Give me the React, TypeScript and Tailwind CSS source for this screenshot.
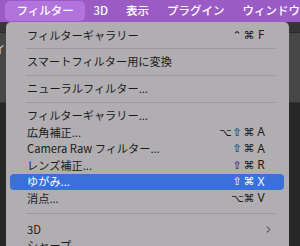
import React from 'react';
import { ChevronRight } from 'lucide-react';

type Row =
  | { kind: 'item'; label: string; keys?: string[]; active?: boolean; sub?: boolean }
  | { kind: 'sep'; h: string };

const rows: Row[] = [
  { kind: 'item', label: 'フィルターギャラリー', keys: ['⌃', '⌘', 'F'] },
  { kind: 'sep', h: 'h-[10px]' },
  { kind: 'item', label: 'スマートフィルター用に変換' },
  { kind: 'sep', h: 'h-[10.5px]' },
  { kind: 'item', label: 'ニューラルフィルター...' },
  { kind: 'sep', h: 'h-[10.5px]' },
  { kind: 'item', label: 'フィルターギャラリー...' },
  { kind: 'item', label: '広角補正...', keys: ['⌥', '⇧', '⌘', 'A'] },
  { kind: 'item', label: 'Camera Raw フィルター...', keys: ['⇧', '⌘', 'A'] },
  { kind: 'item', label: 'レンズ補正...', keys: ['⇧', '⌘', 'R'] },
  { kind: 'item', label: 'ゆがみ...', keys: ['⇧', '⌘', 'X'], active: true },
  { kind: 'item', label: '消点...', keys: ['⌥', '⌘', 'V'] },
  { kind: 'sep', h: 'h-[14.5px]' },
  { kind: 'item', label: '3D', sub: true },
  { kind: 'item', label: 'シャープ' },
];

const jp = { fontFamily: '"Noto Sans CJK JP", "Noto Sans", sans-serif' };
const sym = { fontFamily: '"DejaVu Sans", sans-serif' };

function Keys({ keys }: { keys: string[] }) {
  return (
    <div className="flex items-center">
      {keys.map((k, i) => (
        <span
          key={i}
          className={i === keys.length - 1 ? 'w-[12px] text-center text-[12px] leading-none' : 'w-[12px] text-center text-[11px] leading-none'}
          style={i === keys.length - 1 ? { fontFamily: '"Noto Sans", sans-serif' } : sym}
        >
          {k}
        </span>
      ))}
    </div>
  );
}

export default function App() {
  return (
    <div className="relative w-[300px] h-[246px] overflow-hidden bg-[#272727] flex flex-col" style={jp}>
      {/* menu bar */}
      <div className="h-[22px] bg-[#9b5bc5] flex items-center pl-[5px] text-white text-[11.5px] font-medium shrink-0">
        <div className="w-[82px] h-[20px] rounded-[5px] bg-[#b273dc] flex items-center justify-center">フィルター</div>
        <div className="flex gap-[18px] ml-[8px] whitespace-nowrap">
          <span>3D</span>
          <span>表示</span>
          <span>プラグイン</span>
          <span>ウィンドウ</span>
        </div>
      </div>

      {/* app behind */}
      <div className="h-[11px] bg-[#363636] border-b border-[#2a2a2a] shrink-0" />
      <div className="h-[70px] bg-[#474747] border-b border-[#333] shrink-0 flex items-center">
        <span className="text-[#cfcfcf] text-[11px] -ml-[6px] -mt-[36px]">イ</span>
      </div>
      <div className="flex-1 bg-[#272727]" />

      {/* dropdown */}
      <div className="absolute top-[22px] left-[6px] w-[283px] h-[240px] bg-[#b1aeb1] rounded-[5px] pt-[5px] text-[#1b1b1b] text-[11.2px]">
        {rows.map((r, i) =>
          r.kind === 'sep' ? (
            <div key={i} className={`${r.h} flex items-center pl-[20px] pr-[14px]`}>
              <div className="h-px w-full bg-[#9c999c]" />
            </div>
          ) : (
            <div
              key={i}
              className={
                r.active
                  ? 'h-[16.5px] mx-[4px] mr-[5px] rounded-[4px] bg-[#3a70d7] text-white flex items-center justify-between pl-[17px] pr-[17px]'
                  : 'h-[16.5px] mx-[4px] mr-[5px] flex items-center justify-between pl-[17px] pr-[17px]'
              }
            >
              <span className="whitespace-nowrap leading-none">{r.label}</span>
              {r.keys && <Keys keys={r.keys} />}
              {r.sub && <ChevronRight size={11} strokeWidth={2} className="-mr-[7px] text-[#222]" />}
            </div>
          )
        )}
      </div>
    </div>
  );
}
